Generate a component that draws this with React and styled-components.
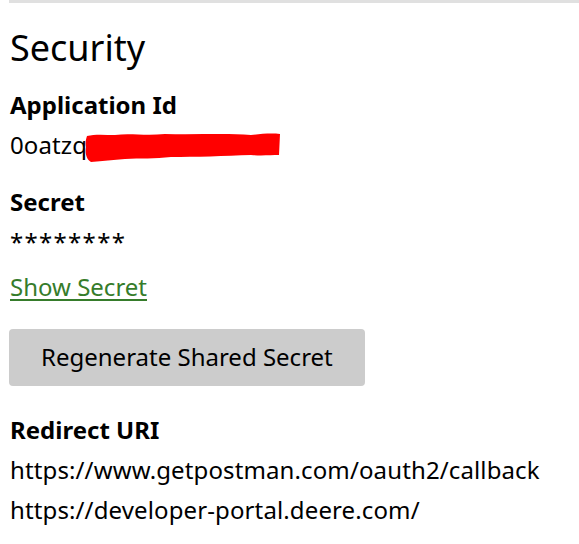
import React from 'react';
import styled, { createGlobalStyle } from 'styled-components';

const GlobalStyle = createGlobalStyle`
  body {
    margin: 0;
    background: #fff;
    font-family: "Noto Sans", "Open Sans", sans-serif;
    color: #000;
  }
`;

const Page = styled.div`
  padding: 0 0 0 9px;
`;

const TopRule = styled.div`
  height: 3px;
  background: #e0e0e0;
`;

const Heading = styled.h2`
  margin: 23px 0 0 1px;
  font-size: 36px;
  line-height: 44px;
  font-weight: 400;
`;

const Label = styled.div`
  margin: ${(p) => p.gap}px 0 0 1px;
  font-size: 24px;
  line-height: 40px;
  font-weight: 700;
`;

const Value = styled.div`
  margin-left: 1px;
  font-size: 24px;
  line-height: 40px;
  letter-spacing: ${(p) => (p.masked ? '1.3px' : '0.12px')};
  white-space: nowrap;
`;

const Scribble = styled.svg`
  display: inline-block;
  vertical-align: top;
  margin: 8px 0 0 -2px;
`;

const Link = styled.a`
  display: block;
  margin: 5px 0 0 1px;
  font-size: 24px;
  line-height: 40px;
  color: #367c2b;
  text-decoration: underline;
  text-decoration-thickness: 2px;
  text-underline-offset: 3px;
  cursor: pointer;
`;

const Button = styled.button`
  display: block;
  margin-top: 22px;
  padding: 8px 32px 9px;
  border: none;
  border-radius: 4px;
  background: #cccccc;
  font-family: inherit;
  font-size: 24px;
  line-height: 40px;
  color: #000;
  cursor: pointer;
`;

export default function App() {
  return (
    <>
      <GlobalStyle />
      <Page>
        <TopRule />
        <Heading>Security</Heading>
        <Label gap={15}>Application Id</Label>
        <Value>
          0oatzq
          <Scribble width="196" height="30" viewBox="0 0 196 30">
            <path
              d="M2 3 C10 1 20 2 30 2 C45 0 60 3 80 1 C110 2 140 0 166 2 C175 1 186 0 195 1 L194 22 C186 22 176 23 166 22 C140 23 110 24 86 24 C70 26 55 25 40 26 C28 27 18 28 6 29 C1 26 0 20 1 14 C0 10 1 6 2 3 Z"
              fill="#ff0000"
            />
          </Scribble>
        </Value>
        <Label gap={17}>Secret</Label>
        <Value masked>********</Value>
        <Link>Show Secret</Link>
        <Button>Regenerate Shared Secret</Button>
        <Label gap={24}>Redirect URI</Label>
        <Value>https://www.getpostman.com/oauth2/callback</Value>
        <Value>https://developer-portal.deere.com/</Value>
      </Page>
    </>
  );
}
